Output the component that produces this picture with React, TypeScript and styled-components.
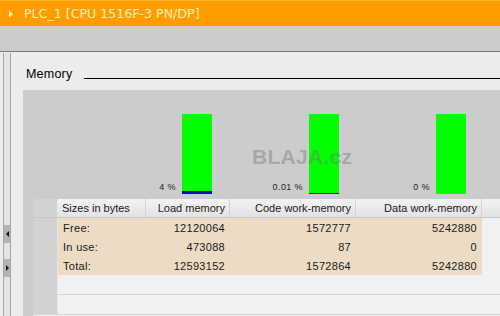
import styled, { createGlobalStyle } from 'styled-components';

interface IMemoryRow {
  label: string;
  load: number;
  code: number;
  data: number;
}

interface IUsage {
  pct: number;
  text: string;
}

const rows: IMemoryRow[] = [
  { label: 'Free:', load: 12120064, code: 1572777, data: 5242880 },
  { label: 'In use:', load: 473088, code: 87, data: 0 },
  { label: 'Total:', load: 12593152, code: 1572864, data: 5242880 },
];

const usage: IUsage[] = [
  { pct: 4, text: '4 %' },
  { pct: 0.01, text: '0.01 %' },
  { pct: 0, text: '0 %' },
];

const BAR_HEIGHT = 80;

const GlobalStyle = createGlobalStyle`
  html, body {
    margin: 0;
    padding: 0;
    width: 500px;
    height: 316px;
    overflow: hidden;
    background: #ececec;
    font-family: 'Liberation Sans', Arial, sans-serif;
  }
`;

function App() {
  return (
    <>
      <GlobalStyle />
      <Window>
        <TitleBar>
          <Caret />
          <TitleText>PLC_1 [CPU 1516F-3 PN/DP]</TitleText>
        </TitleBar>
        <Toolbar />
        <Body>
          <SideStrip>
            <StripButton top={172}>
              <ArrowLeft />
            </StripButton>
            <StripButton top={16}>
              <ArrowRight />
            </StripButton>
          </SideStrip>
          <Main>
            <SectionHead>
              <SectionTitle>Memory</SectionTitle>
              <SectionLine />
            </SectionHead>
            <Panel>
              <Chart>
                {usage.map((u) => {
                  const fill = u.pct > 0 ? Math.max(1, Math.round((u.pct * BAR_HEIGHT) / 100)) : 0;
                  return (
                    <BarGroup key={u.text}>
                      <BarLabel>{u.text}</BarLabel>
                      <Bar>
                        <BarUsed style={{ height: fill }} thin={fill < 2} />
                      </Bar>
                    </BarGroup>
                  );
                })}
                <Watermark>BLAJA.cz</Watermark>
              </Chart>
              <Table>
                <HeadRow>
                  <RowHead />
                  <HeadCell width={88}>Sizes in bytes</HeadCell>
                  <HeadCell width={84} right>Load memory</HeadCell>
                  <HeadCell width={126} right>Code work-memory</HeadCell>
                  <HeadCell width={126} right>Data work-memory</HeadCell>
                  <HeadFill />
                </HeadRow>
                {rows.map((r) => (
                  <DataRow key={r.label}>
                    <RowHead />
                    <Cell width={88}>{r.label}</Cell>
                    <Cell width={84} right>{r.load}</Cell>
                    <Cell width={126} right>{r.code}</Cell>
                    <Cell width={126} right>{r.data}</Cell>
                    <Cell width={0} grow />
                  </DataRow>
                ))}
                <EmptyRow>
                  <RowHead />
                </EmptyRow>
                <EmptyRow>
                  <RowHead />
                </EmptyRow>
              </Table>
            </Panel>
          </Main>
        </Body>
      </Window>
    </>
  );
}

const Window = styled.div`
  width: 500px;
  height: 316px;
  display: flex;
  flex-direction: column;
  overflow: hidden;
`;

const TitleBar = styled.div`
  height: 26px;
  flex: none;
  display: flex;
  align-items: center;
  background: #ff9d00;
  border-top: 1px solid #ffb030;
  box-sizing: border-box;
  padding-left: 9px;
`;

const Caret = styled.span`
  width: 0;
  height: 0;
  border-top: 4px solid transparent;
  border-bottom: 4px solid transparent;
  border-left: 4px solid #fff1c4;
  margin-right: 11px;
`;

const TitleText = styled.span`
  color: #fff0b8;
  font-family: 'DejaVu Sans', Verdana, sans-serif;
  font-size: 12.6px;
`;

const Toolbar = styled.div`
  height: 26px;
  flex: none;
  box-sizing: border-box;
  background: #cccccc;
  border-bottom: 1px solid #7a7a7a;
`;

const Body = styled.div`
  flex: 1;
  display: flex;
  min-height: 0;
`;

const SideStrip = styled.div`
  width: 8px;
  flex: none;
  margin: 1px 12px 0 3px;
  box-sizing: border-box;
  border-left: 1px solid #a6a6a6;
  border-right: 1px solid #a6a6a6;
  background: #e4e4e4;
  display: flex;
  flex-direction: column;
`;

const StripButton = styled.div<{ top: number }>`
  margin-top: ${(p) => p.top}px;
  height: 18px;
  background: #b4b4b4;
  display: flex;
  align-items: center;
  justify-content: center;
`;

const ArrowLeft = styled.span`
  width: 0;
  height: 0;
  border-top: 3px solid transparent;
  border-bottom: 3px solid transparent;
  border-right: 3px solid #111;
`;

const ArrowRight = styled.span`
  width: 0;
  height: 0;
  border-top: 3px solid transparent;
  border-bottom: 3px solid transparent;
  border-left: 3px solid #111;
`;

const Main = styled.div`
  flex: 1;
  display: flex;
  flex-direction: column;
  min-width: 0;
`;

const SectionHead = styled.div`
  height: 38px;
  flex: none;
  display: flex;
  align-items: center;
  padding: 5px 0 0 3px;
  box-sizing: border-box;
`;

const SectionTitle = styled.span`
  font-size: 12.5px;
  color: #000;
  margin-right: 12px;
  letter-spacing: 0.2px;
`;

const SectionLine = styled.div`
  flex: 1;
  height: 1px;
  background: #000;
  margin-top: 10px;
`;

const Panel = styled.div`
  flex: 1;
  background: #cccccc;
  padding-left: 10px;
  display: flex;
  flex-direction: column;
`;

const Chart = styled.div`
  position: relative;
  height: 109px;
  flex: none;
  display: flex;
  align-items: flex-end;
  padding: 0 0 5px 52px;
  box-sizing: border-box;
`;

const BarGroup = styled.div`
  width: 127px;
  display: flex;
  align-items: flex-end;
  gap: 6px;
`;

const BarLabel = styled.span`
  flex: 1;
  text-align: right;
  font-size: 9px;
  color: #222;
  line-height: 11px;
  margin-bottom: 1px;
  letter-spacing: 0.4px;
`;

const Bar = styled.div`
  width: 30px;
  height: ${BAR_HEIGHT}px;
  background: #00ff00;
  display: flex;
  flex-direction: column;
  justify-content: flex-end;
`;

const BarUsed = styled.div<{ thin: boolean }>`
  background: ${(p) => (p.thin ? '#1c2e60' : '#0a14a8')};
`;

const Watermark = styled.span`
  position: absolute;
  left: 219px;
  top: 55px;
  font-family: 'Liberation Sans', Arial, sans-serif;
  font-weight: bold;
  font-size: 21px;
  color: rgba(120, 120, 120, 0.45);
  letter-spacing: 0.3px;
`;

const Table = styled.div`
  flex: 1;
  display: flex;
  flex-direction: column;
  background: #f1f1f1;
  font-size: 11px;
  color: #1a1a1a;
`;

const HeadRow = styled.div`
  height: 18px;
  display: flex;
  background: linear-gradient(#f3f3f3, #e2e2e2);
  border-bottom: 1px solid #c8c8c8;
`;

const RowHead = styled.div`
  width: 25px;
  flex: none;
  background: #d2d2d2;
  border-right: 1px solid #e6e6e6;
  box-sizing: border-box;
`;

const HeadCell = styled.div<{ width: number; right?: boolean }>`
  width: ${(p) => p.width}px;
  flex: none;
  box-sizing: border-box;
  padding: 0 4px;
  display: flex;
  align-items: center;
  justify-content: ${(p) => (p.right ? 'flex-end' : 'flex-start')};
  border-right: 1px solid #d4d4d4;
  white-space: nowrap;
`;

const HeadFill = styled.div`
  flex: 1;
`;

const DataRow = styled.div`
  height: 19px;
  display: flex;
  background: #ecdcc5;
`;

const Cell = styled.div<{ width: number; right?: boolean; grow?: boolean }>`
  width: ${(p) => p.width}px;
  flex: ${(p) => (p.grow ? 1 : 'none')};
  box-sizing: border-box;
  padding: 0 5px;
  display: flex;
  align-items: center;
  justify-content: ${(p) => (p.right ? 'flex-end' : 'flex-start')};
  letter-spacing: 0.3px;
  white-space: nowrap;
  ${(p) => p.grow && 'background: #f1f1f1;'}
`;

const EmptyRow = styled.div`
  height: 19px;
  flex: none;
  display: flex;
  border-bottom: 1px solid #d6d6d6;
`;

export default App;
